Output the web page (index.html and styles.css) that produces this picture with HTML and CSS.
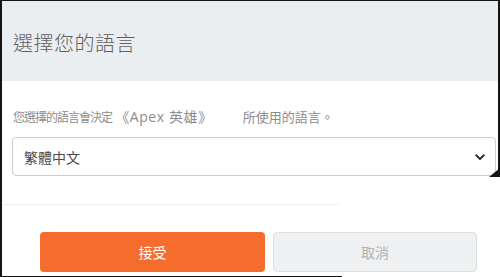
FILE: index.html
```
<!DOCTYPE html>
<html lang="zh-Hant">
<head>
<meta charset="utf-8">
<title>選擇您的語言</title>
<link rel="stylesheet" href="styles.css">
</head>
<body>
<div class="frame">
  <div class="top">
    <div class="header"><h1 class="title">選擇您的語言</h1></div>
    <div class="body">
      <p class="label"><span class="lead">您選擇的語言會決定</span> <span class="game">《Apex 英雄》</span><span class="tail">所使用的語言。</span></p>
      <div class="select">
        <span class="select-text">繁體中文</span>
        <svg class="chevron" width="10" height="7" viewBox="0 0 10 7"><path d="M1.2 1.3 L5 5 L8.8 1.3" fill="none" stroke="#333" stroke-width="2" stroke-linecap="round" stroke-linejoin="round"/></svg>
      </div>
    </div>
  </div>
  <div class="lower">
    <div class="divider"></div>
    <div class="actions">
      <button class="btn btn-accept">接受</button>
      <button class="btn btn-cancel">取消</button>
    </div>
    <div class="bottom-line"></div>
  </div>
</div>
</body>
</html>
```
FILE: styles.css
```
* { box-sizing: border-box; }
html, body { margin: 0; padding: 0; background: #fff; }
body {
  width: 500px;
  height: 277px;
  overflow: hidden;
  font-family: "Open Sans", "Noto Sans CJK TC", sans-serif;
}
.frame {
  width: 500px;
  height: 277px;
  border-top: 1px solid #141414;
  border-left: 2px solid #141414;
  display: flex;
  flex-direction: column;
}
.top {
  position: relative;
  border-right: 2px solid #141414;
  padding-bottom: 1px;
}
.top::after {
  content: "";
  position: absolute;
  right: -2px;
  bottom: 0;
  width: 11px;
  height: 9px;
  background: #141414;
  clip-path: polygon(100% 0, 100% 100%, 0 100%);
}
.header {
  height: 80px;
  background: #ebeef0;
  display: flex;
  align-items: center;
  padding-left: 11px;
  padding-top: 2px;
}
.title {
  margin: 0;
  font-size: 20px;
  font-weight: 300;
  color: #606060;
  letter-spacing: 0.5px;
}
.body {
  padding: 27px 0 0 10px;
}
.label {
  margin: 0 0 10px 1px;
  font-size: 12px;
  line-height: 18px;
  color: #8c8c8c;
  white-space: nowrap;
}
.lead { letter-spacing: -1px; }
.game { font-size: 14px; letter-spacing: 0.6px; }
.tail { font-size: 13px; margin-left: 30px; }
.select {
  width: 484px;
  height: 39px;
  border: 1px solid #cfcfcf;
  border-radius: 4px;
  display: flex;
  align-items: center;
  justify-content: space-between;
  padding: 0 10px 0 11px;
}
.select-text {
  font-size: 14px;
  color: #4a4a4a;
}
.chevron { display: block; margin-top: 1px; }
.lower {
  display: flex;
  flex-direction: column;
}
.divider {
  margin-top: 27px;
  width: 336px;
  height: 1px;
  background: #efefef;
}
.actions {
  margin-top: 27px;
  padding-left: 38px;
  display: flex;
  gap: 8px;
}
.btn {
  height: 40px;
  border-radius: 4px;
  font-family: "Open Sans", "Noto Sans CJK TC", sans-serif;
  font-size: 14px;
  padding: 0;
}
.btn-accept {
  width: 225px;
  background: #f46d2c;
  border: none;
  color: #fff;
}
.btn-cancel {
  width: 204px;
  background: #eef0f1;
  border: 1px solid #dcdfe0;
  color: #b3b3b3;
}
.bottom-line {
  margin-top: 4px;
  width: 340px;
  height: 2px;
  background: #141414;
}
```
